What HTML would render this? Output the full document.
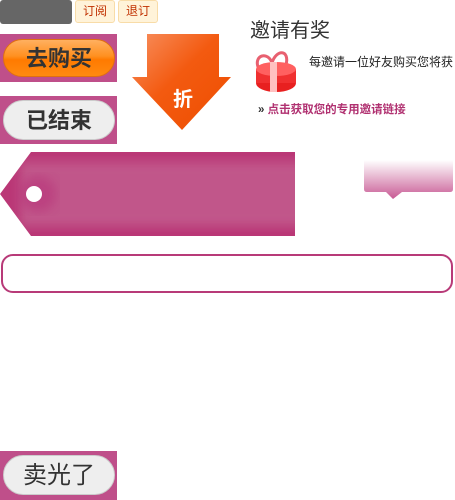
<!DOCTYPE html><html><head><meta charset="utf-8"><style>
*{margin:0;padding:0;box-sizing:border-box}
body{width:455px;height:500px;background:#fff;position:relative;overflow:hidden;font-family:"Liberation Sans","Noto Sans CJK SC",sans-serif}
.a{position:absolute}
.sb{top:0;height:23px;width:40px;background:#fff3d9;border:1px solid #f8dca8;border-radius:3px;color:#c03000;font-size:12px;text-align:center;line-height:21px}
.pk{background:#bf4f8a;left:0;width:117px}
.pill{position:absolute;left:3px;right:2px;border-radius:20px;text-align:center;font-weight:bold;font-size:22px;color:#333}
</style></head><body>
<div class="a" style="left:0;top:0;width:72px;height:24px;background:#666;border-radius:3px"></div>
<div class="a sb" style="left:75px">订阅</div>
<div class="a sb" style="left:118px">退订</div>

<div class="a pk" style="top:34px;height:48px"><div class="pill" style="top:5px;height:38px;line-height:38px;background:linear-gradient(#ffb060,#ff9020 45%,#ff7a00 55%,#ff8a10);border:1px solid #e07010">去购买</div></div>
<div class="a pk" style="top:96px;height:48px"><div class="pill" style="top:4px;height:40px;line-height:40px;background:#eee;border:1px solid #ccc">已结束</div></div>

<svg class="a" style="left:130px;top:32px" width="104" height="102"><defs><linearGradient id="g" x1="0" y1="0" x2="1" y2="1"><stop offset="0" stop-color="#f89060"/><stop offset=".45" stop-color="#f35a10"/><stop offset="1" stop-color="#ee4e00"/></linearGradient></defs><polygon points="17,2 89,2 89,45 101,45 52,98 2,45 17,45" fill="url(#g)"/><text x="53" y="74" font-size="20" font-weight="bold" fill="#fff" text-anchor="middle" font-family="Noto Sans CJK SC">折</text></svg>

<div class="a" style="left:250px;top:14px;font-size:20px;color:#333">邀请有奖</div>
<svg class="a" style="left:250px;top:45px" width="52" height="52"><path d="M8,22 C4,10 18,6 22,18 C26,4 40,4 36,20" stroke="#e86070" stroke-width="3" fill="none"/><ellipse cx="26" cy="38" rx="20" ry="9" fill="#e82020"/><rect x="6" y="24" width="40" height="14" fill="#f03030"/><ellipse cx="26" cy="24" rx="20" ry="7" fill="#ff6060"/><rect x="20" y="17" width="7" height="30" fill="#ffc0c0"/></svg>
<div class="a" style="left:309px;top:53px;font-size:12px;color:#222;white-space:nowrap">每邀请一位好友购买您将获</div>
<div class="a" style="left:258px;top:101px;font-size:11.5px;color:#333;font-weight:bold">» <span style="color:#b03070">点击获取您的专用邀请链接</span></div>

<svg class="a" style="left:0;top:152px" width="296" height="85"><defs><filter id="f"><feGaussianBlur stdDeviation="5"/></filter><clipPath id="c"><polygon points="31,0 295,0 295,84 31,84 0,42"/></clipPath></defs><polygon points="31,0 295,0 295,84 31,84 0,42" fill="#ba3776"/><g clip-path="url(#c)"><rect x="20" y="10" width="290" height="64" fill="#c1568a" filter="url(#f)"/><circle cx="38" cy="42" r="18" fill="#b8367a" opacity=".6" filter="url(#f)"/></g><circle cx="34" cy="42" r="8" fill="#fff"/></svg>

<svg class="a" style="left:363px;top:160px" width="92" height="42"><defs><linearGradient id="b" x1="0" y1="0" x2="0" y2="1"><stop offset="0" stop-color="#fff"/><stop offset="1" stop-color="#c85a94"/></linearGradient></defs><path d="M1,0 H90 V29 Q90,32 87,32 H39 L30,39 L23,32 H4 Q1,32 1,29 Z" fill="url(#b)"/></svg>

<div class="a" style="left:1px;top:254px;width:452px;height:39px;border:2px solid #b83a78;border-radius:12px"></div>

<div class="a pk" style="top:451px;height:49px"><div class="pill" style="top:4px;height:40px;line-height:40px;background:#eee;border:1px solid #ccc;font-weight:normal;font-size:24px">卖光了</div></div>
</body></html>
